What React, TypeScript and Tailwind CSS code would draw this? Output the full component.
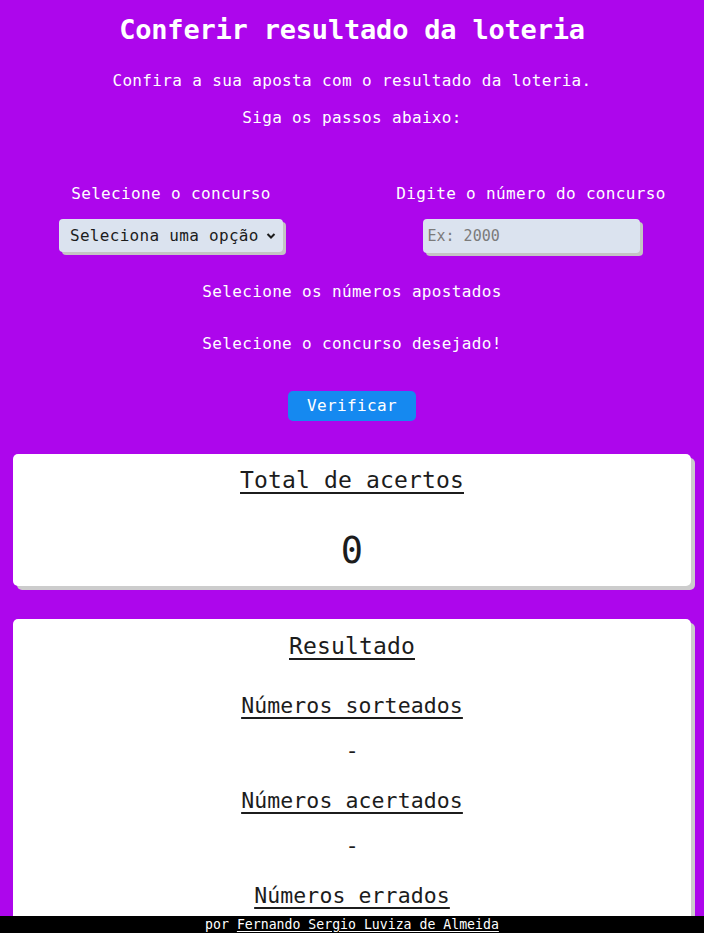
import React, { useState } from "react";

const mono = "font-['DejaVu_Sans_Mono','Liberation_Mono',monospace]";

function Card({ children, height }: { children: React.ReactNode; height: string }) {
  return (
    <div
      className={`mx-[13px] ${height} rounded-[5px] bg-white text-[#1c1c1c] shadow-[4px_4px_0_#cccccc]`}
    >
      {children}
    </div>
  );
}

export default function App() {
  const [concurso, setConcurso] = useState("");

  return (
    <div className={`${mono} min-h-screen bg-[#ad06ec] pb-[60px] text-white`}>
      {/* Header */}
      <h1 className="flex h-[58px] items-center justify-center pt-[2px] text-[27px] font-bold tracking-[-0.2px]">
        Conferir resultado da loteria
      </h1>
      <p className="flex h-[40px] items-center justify-center pt-[6px] text-[16px] tracking-[0.35px]">
        Confira a sua aposta com o resultado da loteria.
      </p>
      <p className="flex h-[36px] items-center justify-center pt-[4px] text-[16px] tracking-[0.35px]">
        Siga os passos abaixo:
      </p>

      {/* Form */}
      <div className="mt-[47px] flex pl-[46px]">
        <div className="flex w-[250px] flex-col items-center">
          <label className="flex h-[26px] items-center text-[16px] tracking-[0.35px]">
            Selecione o concurso
          </label>
          <div className="relative mt-[12px] h-[33px] w-[224px] rounded-[4px] bg-[#dbe3ef] shadow-[3px_3px_0_#c4c4c4]">
            <select
              value={concurso}
              onChange={(e) => setConcurso(e.target.value)}
              className={`${mono} h-full w-full appearance-none bg-transparent pl-[11px] text-[16px] tracking-[0.3px] text-[#1c1c1c] outline-none`}
            >
              <option value="">Seleciona uma opção</option>
              <option value="lotofacil">Lotofácil</option>
              <option value="megasena">Mega-Sena</option>
            </select>
            <svg
              className="pointer-events-none absolute right-[7px] top-[13px] h-[8px] w-[10px]"
              viewBox="0 0 10 8"
              fill="none"
              stroke="#1c1c1c"
              strokeWidth={2}
            >
              <path d="M1.5 2l3.5 3.5L8.5 2" />
            </svg>
          </div>
        </div>

        <div className="ml-[90px] flex w-[290px] flex-col items-center">
          <label className="flex h-[26px] items-center text-[16px] tracking-[0.35px]">
            Digite o número do concurso
          </label>
          <input
            placeholder="Ex: 2000"
            className={`${mono} mt-[12px] h-[34px] w-[217px] rounded-[4px] bg-[#dbe3ef] pl-[5px] text-[15px] text-[#1c1c1c] shadow-[3px_3px_0_#c4c4c4] outline-none placeholder:text-[#7b7b7b]`}
          />
        </div>
      </div>

      <p className="mt-[26px] flex h-[26px] items-center justify-center text-[16px] tracking-[0.35px]">
        Selecione os números apostados
      </p>
      <p className="mt-[26px] flex h-[26px] items-center justify-center text-[16px] tracking-[0.35px]">
        Selecione o concurso desejado!
      </p>

      <div className="mt-[34px] flex justify-center">
        <button className="h-[30px] w-[128px] rounded-[5px] bg-[#1589f0] text-[16px] tracking-[0.35px] text-white">
          Verificar
        </button>
      </div>

      {/* Total */}
      <div className="mt-[33px]">
        <Card height="h-[132px]">
          <h2 className="flex h-[50px] items-center justify-center pt-[2px] text-[23px] tracking-[0.15px] underline decoration-2 underline-offset-[4px]">
            Total de acertos
          </h2>
          <p className="mt-[27px] flex h-[40px] items-center justify-center text-[37px]">0</p>
        </Card>
      </div>

      {/* Resultado */}
      <div className="mt-[33px]">
        <Card height="h-[420px]">
          <h2 className="flex h-[52px] items-center justify-center pt-[2px] text-[23px] tracking-[0.15px] underline decoration-2 underline-offset-[4px]">
            Resultado
          </h2>
          {["Números sorteados", "Números acertados", "Números errados"].map((t, i) => (
            <div key={t}>
              <h3
                className={`${i === 0 ? "mt-[22px]" : "mt-[25px]"} flex h-[26px] items-center justify-center text-[21.5px] tracking-[0.1px] underline decoration-2 underline-offset-[4px]`}
              >
                {t}
              </h3>
              <p className="mt-[18px] flex h-[26px] items-center justify-center text-[22px]">-</p>
            </div>
          ))}
        </Card>
      </div>

      {/* Footer */}
      <footer className="fixed bottom-0 left-0 right-0 z-10 flex h-[17px] items-center justify-center bg-black text-[13.2px] leading-none text-white">
        por&nbsp;
        <a href="#" className="text-white underline underline-offset-2">
          Fernando Sergio Luviza de Almeida
        </a>
      </footer>
    </div>
  );
}
